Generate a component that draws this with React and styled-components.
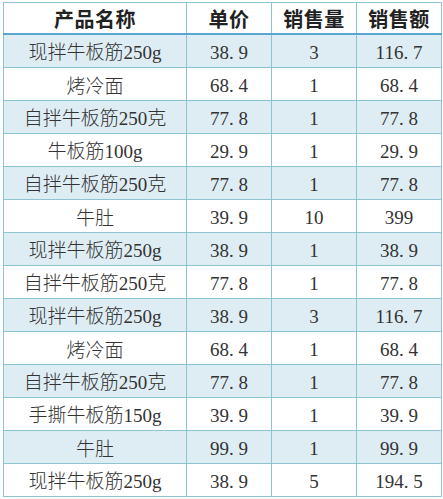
import React from "react";
import styled, { createGlobalStyle } from "styled-components";

const rows = [
  ["现拌牛板筋250g", "38.9", "3", "116.7"],
  ["烤冷面", "68.4", "1", "68.4"],
  ["自拌牛板筋250克", "77.8", "1", "77.8"],
  ["牛板筋100g", "29.9", "1", "29.9"],
  ["自拌牛板筋250克", "77.8", "1", "77.8"],
  ["牛肚", "39.9", "10", "399"],
  ["现拌牛板筋250g", "38.9", "1", "38.9"],
  ["自拌牛板筋250克", "77.8", "1", "77.8"],
  ["现拌牛板筋250g", "38.9", "3", "116.7"],
  ["烤冷面", "68.4", "1", "68.4"],
  ["自拌牛板筋250克", "77.8", "1", "77.8"],
  ["手撕牛板筋150g", "39.9", "1", "39.9"],
  ["牛肚", "99.9", "1", "99.9"],
  ["现拌牛板筋250g", "38.9", "5", "194.5"],
];

const GlobalStyle = createGlobalStyle`
  body {
    margin: 0;
    padding: 2px 0 0 3px;
    background: #ffffff;
  }
`;

const Table = styled.table`
  border-collapse: collapse;
  table-layout: fixed;
  width: 438px;
  color: #333;
`;

const HeadCell = styled.th`
  height: 30px;
  padding: 0;
  border: 1px solid #8cc4d2;
  border-bottom: 2px solid #5ba6cf;
  font-family: "Noto Sans CJK SC", "Liberation Sans", sans-serif;
  font-size: 20px;
  font-weight: 700;
  letter-spacing: 0.5px;
  color: #222;
  text-align: center;
  vertical-align: middle;
`;

const Row = styled.tr`
  background: ${(p) => (p.$band ? "#deedf4" : "#ffffff")};
`;

const Cell = styled.td`
  height: 32px;
  padding: 0;
  border: 1px solid #8cc4d2;
  font-family: "Noto Sans CJK SC", sans-serif;
  font-size: 19px;
  font-weight: 300;
  text-align: center;
  vertical-align: middle;
  white-space: nowrap;
  line-height: 1;
`;

const Latin = styled.span`
  font-family: "Liberation Serif", serif;
  font-size: 19px;
  font-weight: 400;
`;

// the period sits in a half-width cell, as in the Song face of the original
const Dot = styled.span`
  display: inline-block;
  width: 0.5em;
  text-align: left;
`;

const latinRun = (part, key) => (
  <Latin key={key}>
    {part.split(/(\.)/).map((p, j) => (p === "." ? <Dot key={j}>.</Dot> : p))}
  </Latin>
);

const splitRuns = (text) =>
  text
    .split(/([\x00-\x7f]+)/)
    .filter(Boolean)
    .map((part, i) => (/^[\x00-\x7f]+$/.test(part) ? latinRun(part, i) : part));

export default function App() {
  return (
    <>
      <GlobalStyle />
      <Table>
        <colgroup>
          <col style={{ width: 183 }} />
          <col style={{ width: 85 }} />
          <col style={{ width: 85 }} />
          <col style={{ width: 85 }} />
        </colgroup>
        <thead>
          <tr>
            <HeadCell>产品名称</HeadCell>
            <HeadCell>单价</HeadCell>
            <HeadCell>销售量</HeadCell>
            <HeadCell>销售额</HeadCell>
          </tr>
        </thead>
        <tbody>
          {rows.map(([name, price, qty, total], i) => (
            <Row key={i} $band={i % 2 === 0}>
              <Cell>{splitRuns(name)}</Cell>
              <Cell>{splitRuns(price)}</Cell>
              <Cell>{splitRuns(qty)}</Cell>
              <Cell>{splitRuns(total)}</Cell>
            </Row>
          ))}
        </tbody>
      </Table>
    </>
  );
}
